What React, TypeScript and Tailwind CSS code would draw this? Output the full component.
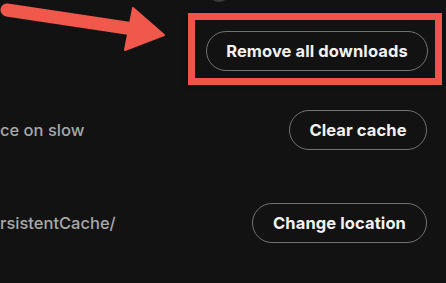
import React from "react";

function PillButton({ label, className = "" }: { label: string; className?: string }) {
  return (
    <button
      className={`h-[40px] rounded-full border-[1.5px] border-[#727272] bg-transparent text-[16.5px] font-bold tracking-[0.1px] text-[#f2f2f2] ${className}`}
    >
      {label}
    </button>
  );
}

function Arrow() {
  return (
    <svg
      className="absolute left-0 top-0"
      width="170"
      height="56"
      viewBox="0 0 170 56"
    >
      <path d="M7 10 L140 30" stroke="#f0584b" strokeWidth="13" strokeLinecap="round" />
      <path d="M133 8 L164 35 L125 50 Z" fill="#f0584b" stroke="#f0584b" strokeWidth="2" strokeLinejoin="round" />
    </svg>
  );
}

export default function App() {
  return (
    <div
      className="relative h-[283px] w-[446px] overflow-hidden bg-[#121212]"
      style={{ fontFamily: "Inter, 'Noto Sans', sans-serif" }}
    >
      {/* toggle peeking in from above */}
      <div className="absolute left-[208px] top-[-20px] h-[22px] w-[22px] rounded-full bg-[#3a3a3a]" />

      <div className="flex flex-col pr-[4px] pt-[13px]">
        <div className="flex justify-end">
          <div className="border-[7px] border-[#ef5349] pb-[7px] pl-[11px] pr-[7px] pt-[11px] shadow-[0_0_4px_rgba(0,0,0,0.6)]">
            <PillButton label="Remove all downloads" className="w-[222px]" />
          </div>
        </div>

        <div className="mt-[25px] flex items-center justify-between pr-[15px]">
          <span className="text-[16.5px] font-medium text-[#a8a8a8]">ce on slow</span>
          <PillButton label="Clear cache" className="w-[138px]" />
        </div>

        <div className="mt-[53px] flex items-center justify-between pr-[15px]">
          <span className="text-[16.5px] font-medium text-[#a8a8a8]">rsistentCache/</span>
          <PillButton label="Change location" className="w-[175px]" />
        </div>
      </div>

      <Arrow />
    </div>
  );
}
